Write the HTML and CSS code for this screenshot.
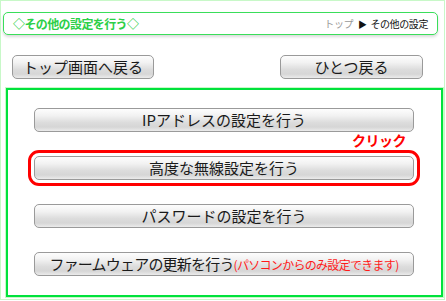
FILE: index.html
```html
<!DOCTYPE html>
<html lang="ja">
<head>
  <meta charset="UTF-8">
  <title>その他の設定</title>
  <link rel="stylesheet" href="styles.css">
</head>
<body>
  <div class="page">
    <div class="header">
      <span class="title">◇その他の設定を行う◇</span>
      <span class="crumbs"><span class="crumb-top">トップ</span> <span class="crumb-arrow">▶</span> その他の設定</span>
    </div>

    <div class="nav">
      <button class="btn nav-btn wide">トップ画面へ戻る</button>
      <button class="btn nav-btn">ひとつ戻る</button>
    </div>

    <div class="menu">
      <button class="btn menu-btn">IPアドレスの設定を行う</button>
      <div class="highlight">
        <span class="callout">クリック</span>
        <button class="btn menu-btn picked">高度な無線設定を行う</button>
      </div>
      <button class="btn menu-btn">パスワードの設定を行う</button>
      <button class="btn menu-btn tight">ファームウェアの更新を行う<span class="note">(パソコンからのみ設定できます)</span></button>
    </div>
  </div>
</body>
</html>
```

FILE: styles.css
```css
body {
  margin: 0;
  background-color: #fff;
  font-family: "Noto Sans CJK JP", "DejaVu Sans", sans-serif;
}

.page {
  width: 445px;
  height: 300px;
  box-sizing: border-box;
  border: 1px solid #c8f8c8;
  padding: 11px 0 0 2px;
}

.header {
  width: 435px;
  height: 23px;
  box-sizing: border-box;
  border: 1px solid #3ade5a;
  border-radius: 5px;
  box-shadow: 0 2px 3px rgba(0, 0, 0, 0.15);
  display: flex;
  align-items: center;
  justify-content: space-between;
  padding: 0 9px 0 9px;
}

.title {
  color: #2ccf48;
  font-size: 12px;
  font-weight: bold;
  letter-spacing: -0.6px;
}

.crumbs {
  font-size: 10px;
  color: #111;
  letter-spacing: -0.4px;
}

.crumb-top {
  color: #999;
  margin-right: 3px;
}

.crumb-arrow {
  font-size: 9px;
  margin-right: 2px;
}

.nav {
  display: flex;
  justify-content: space-between;
  margin-top: 20px;
  padding: 0 21px 0 9px;
}

.btn {
  display: block;
  box-sizing: border-box;
  border: 1px solid #9a9a9a;
  border-radius: 5px;
  background: linear-gradient(to bottom, #fdfdfd 0%, #f2f2f2 30%, #dcdcdc 62%, #d6d6d6 82%, #ebebeb 100%);
  color: #1a1a1a;
  font-family: inherit;
  font-size: 15px;
  padding: 0;
  line-height: 22px;
  text-align: center;
}

.nav-btn {
  width: 143px;
  height: 24px;
}

.nav-btn.wide {
  width: 142px;
}

.menu {
  width: 437px;
  height: 209px;
  box-sizing: border-box;
  margin: 9px 0 0 3px;
  border: 2px solid #00e23c;
  box-shadow: 0 0 0 1px #c8f8c8;
  padding: 18px 0 0 26px;
  display: flex;
  flex-direction: column;
  gap: 24px;
}

.menu-btn {
  width: 380px;
  height: 24px;
}

.menu-btn.tight {
  letter-spacing: -0.8px;
}

.highlight {
  position: relative;
  width: 380px;
}

.picked {
  outline: 3px solid #f00;
  outline-offset: 3px;
}

.callout {
  position: absolute;
  right: 8px;
  top: -24px;
  color: #f00;
  font-size: 14px;
  font-weight: bold;
  letter-spacing: -0.5px;
  line-height: 16px;
}

.note {
  color: #ff1a1a;
  font-size: 12px;
  letter-spacing: -0.7px;
}
```
